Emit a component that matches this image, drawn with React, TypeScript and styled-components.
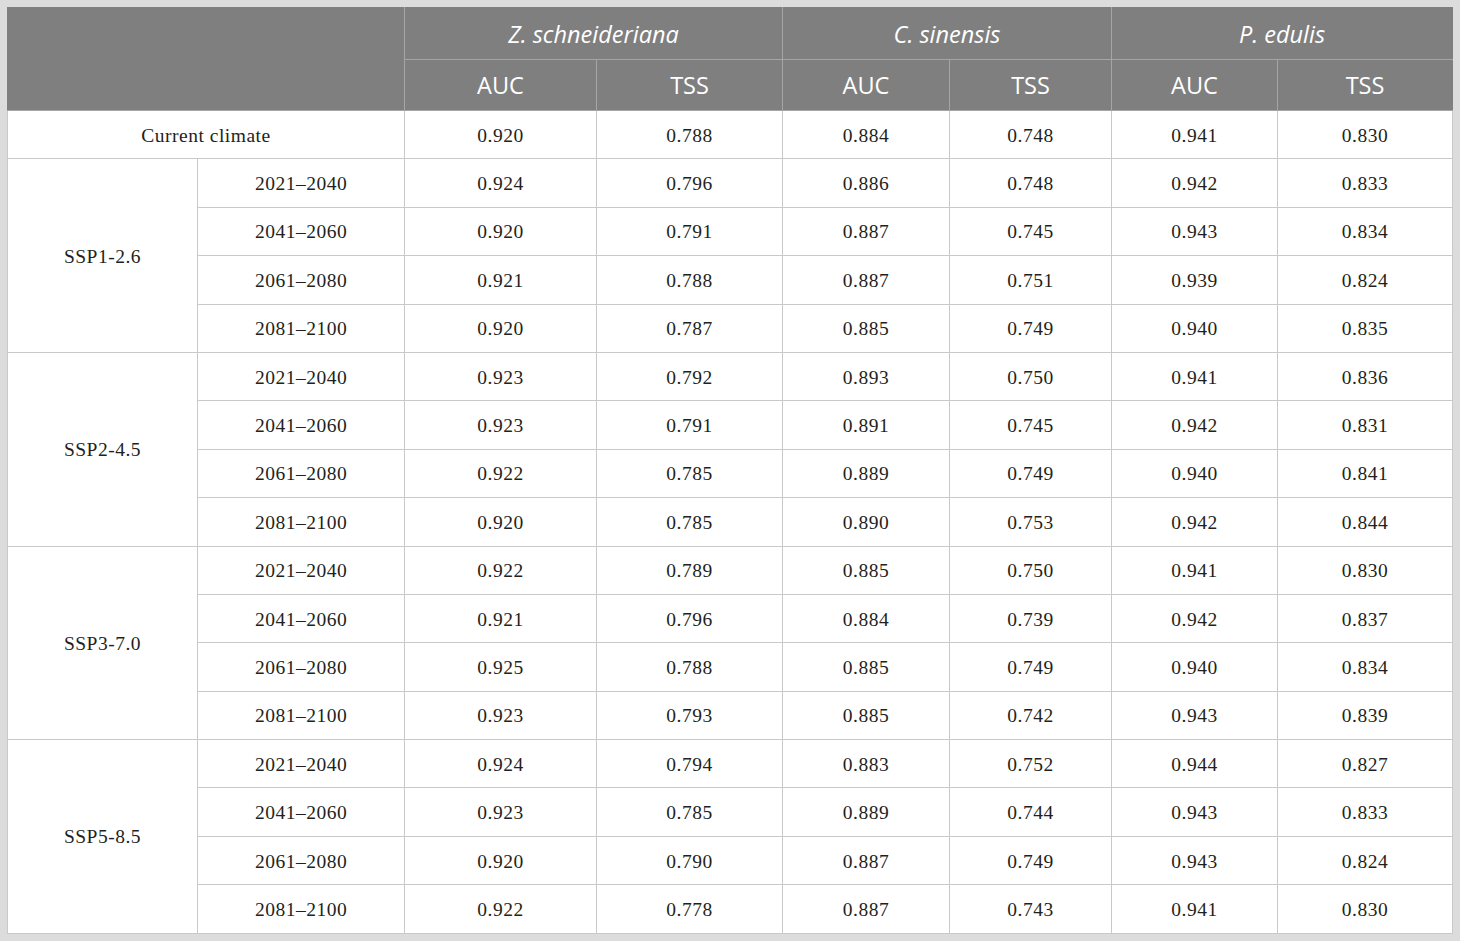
import React from 'react';
import styled, { createGlobalStyle } from 'styled-components';

const GlobalStyle = createGlobalStyle`
  html, body {
    margin: 0;
    padding: 0;
    background: #dcdcdc;
  }
`;

const periods = ['2021–2040', '2041–2060', '2061–2080', '2081–2100'];

interface Scenario {
  name: string;
  rows: string[][];
}

const current = ['0.920', '0.788', '0.884', '0.748', '0.941', '0.830'];

const scenarios: Scenario[] = [
  {
    name: 'SSP1-2.6',
    rows: [
      ['0.924', '0.796', '0.886', '0.748', '0.942', '0.833'],
      ['0.920', '0.791', '0.887', '0.745', '0.943', '0.834'],
      ['0.921', '0.788', '0.887', '0.751', '0.939', '0.824'],
      ['0.920', '0.787', '0.885', '0.749', '0.940', '0.835'],
    ],
  },
  {
    name: 'SSP2-4.5',
    rows: [
      ['0.923', '0.792', '0.893', '0.750', '0.941', '0.836'],
      ['0.923', '0.791', '0.891', '0.745', '0.942', '0.831'],
      ['0.922', '0.785', '0.889', '0.749', '0.940', '0.841'],
      ['0.920', '0.785', '0.890', '0.753', '0.942', '0.844'],
    ],
  },
  {
    name: 'SSP3-7.0',
    rows: [
      ['0.922', '0.789', '0.885', '0.750', '0.941', '0.830'],
      ['0.921', '0.796', '0.884', '0.739', '0.942', '0.837'],
      ['0.925', '0.788', '0.885', '0.749', '0.940', '0.834'],
      ['0.923', '0.793', '0.885', '0.742', '0.943', '0.839'],
    ],
  },
  {
    name: 'SSP5-8.5',
    rows: [
      ['0.924', '0.794', '0.883', '0.752', '0.944', '0.827'],
      ['0.923', '0.785', '0.889', '0.744', '0.943', '0.833'],
      ['0.920', '0.790', '0.887', '0.749', '0.943', '0.824'],
      ['0.922', '0.778', '0.887', '0.743', '0.941', '0.830'],
    ],
  },
];

const species = ['Z. schneideriana', 'C. sinensis', 'P. edulis'];
const colWidths = [190, 207, 192, 186, 167, 162, 166, 175];

function App() {
  return (
    <>
      <GlobalStyle />
      <Page>
        <Table>
          <colgroup>
            {colWidths.map((w, i) => (
              <col key={i} style={{ width: w }} />
            ))}
          </colgroup>
          <thead>
            <HeadRow $height={52}>
              <HeadCell colSpan={2} rowSpan={2} />
              {species.map((s) => (
                <HeadCell key={s} colSpan={2}>
                  <em>{s}</em>
                </HeadCell>
              ))}
            </HeadRow>
            <HeadRow $height={51}>
              {species.map((s) => (
                <React.Fragment key={s}>
                  <HeadCell>AUC</HeadCell>
                  <HeadCell>TSS</HeadCell>
                </React.Fragment>
              ))}
            </HeadRow>
          </thead>
          <tbody>
            <BodyRow>
              <Cell colSpan={2}>Current climate</Cell>
              {current.map((v, i) => (
                <Cell key={i}>{v}</Cell>
              ))}
            </BodyRow>
            {scenarios.map((sc) =>
              sc.rows.map((row, ri) => (
                <BodyRow key={sc.name + ri}>
                  {ri === 0 && <Cell rowSpan={4}>{sc.name}</Cell>}
                  <Cell>{periods[ri]}</Cell>
                  {row.map((v, i) => (
                    <Cell key={i}>{v}</Cell>
                  ))}
                </BodyRow>
              )),
            )}
          </tbody>
        </Table>
      </Page>
    </>
  );
}

const Page = styled.div`
  padding: 7px 8px 8px 7px;
  width: 1445px;
`;

const Table = styled.table`
  width: 1445px;
  table-layout: fixed;
  border-collapse: collapse;
  background: #ffffff;
`;

const HeadRow = styled.tr<{ $height: number }>`
  height: ${(p) => p.$height}px;
`;

const HeadCell = styled.th`
  background: #7f7f7f;
  color: #ffffff;
  font-family: 'Open Sans', 'Liberation Sans', sans-serif;
  font-size: 23.5px;
  font-weight: 400;
  text-align: center;
  vertical-align: middle;
  padding: 0;
  border: 1px solid #a5a5a5;
  border-top-color: #7f7f7f;

  &:first-child {
    border-left-color: #7f7f7f;
  }

  &:last-child {
    border-right-color: #7f7f7f;
  }

  em {
    font-style: italic;
  }
`;

const BodyRow = styled.tr`
  height: 48.4px;
`;

const Cell = styled.td`
  font-family: 'Liberation Serif', 'Times New Roman', serif;
  font-size: 19.5px;
  letter-spacing: 0.5px;
  color: #231f20;
  text-align: center;
  vertical-align: middle;
  padding: 2px 0 0;
  border: 1px solid #c9c9c9;
`;

export default App;
